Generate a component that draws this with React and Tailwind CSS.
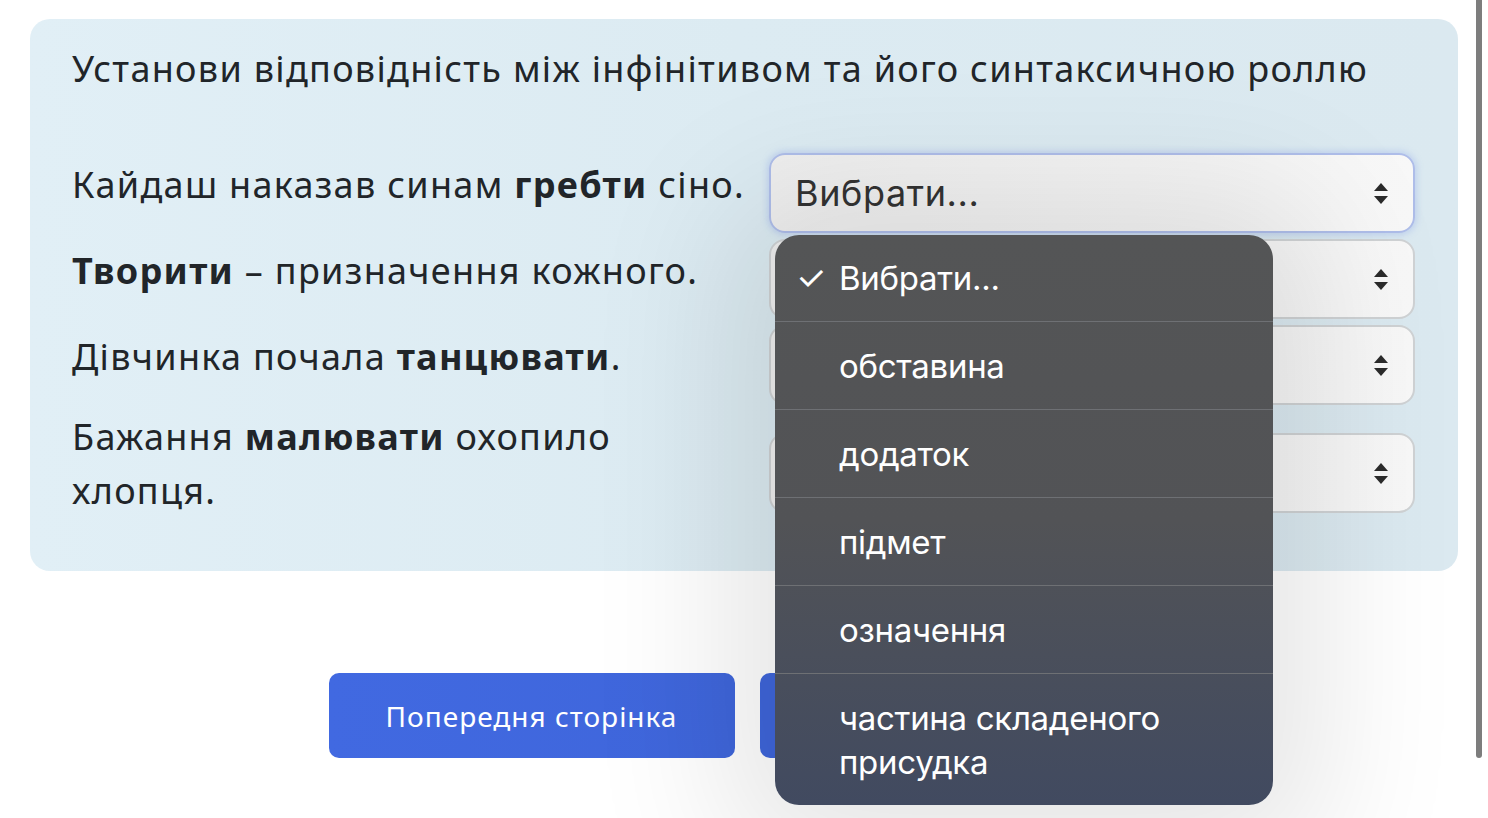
import { useState } from "react";

const ROWS = [
  { pre: "Кайдаш наказав синам ", bold: "гребти", post: " сіно." },
  { pre: "", bold: "Творити", post: " – призначення кожного." },
  { pre: "Дівчинка почала ", bold: "танцювати", post: "." },
  { pre: "Бажання ", bold: "малювати", post: " охопило хлопця." },
];

const OPTIONS = ["Вибрати...", "обставина", "додаток", "підмет", "означення", "частина складеного присудка"];

const SANS = "font-['Noto_Sans','Open_Sans',sans-serif]";
const SYS = "font-['Inter','Roboto',sans-serif]";

function Arrows() {
  return (
    <svg width="14" height="21" viewBox="0 0 14 21" className="shrink-0">
      <path d="M7 0 L14 8 H0 Z" fill="#2b2b2b" />
      <path d="M0 13 H14 L7 21 Z" fill="#2b2b2b" />
    </svg>
  );
}

function SelectBox({ focused, label }) {
  return (
    <div
      className={
        "h-[80px] flex-1 flex items-center justify-between pl-[24px] pr-[25px] rounded-[16px] bg-gradient-to-r from-[#efefef] to-[#f8f8f8] " +
        (focused
          ? "border-2 border-[#aebde9] shadow-[0_0_6px_2px_rgba(140,165,235,0.35)]"
          : "border-2 border-[#cfd2d4]")
      }
    >
      <span className={`${SYS} text-[36px] text-[#333] tracking-[0.6px]`}>{label}</span>
      <Arrows />
    </div>
  );
}

function Label({ row, className }) {
  return (
    <p className={className}>
      {row.pre}
      <b className="font-bold">{row.bold}</b>
      {row.post}
    </p>
  );
}

export default function App() {
  const [open] = useState(true);

  return (
    <div className={`relative w-[1488px] h-[818px] overflow-hidden bg-white ${SANS} text-[#212529]`}>
      <div className="pt-[19px] pl-[30px] pr-[30px]">
        <div className="h-[552px] rounded-[20px] bg-gradient-to-r from-[#e1eff6] via-[#dcebf2] to-[#dbe9f0] pt-[26px] pl-[42px] pr-[43px]">
          <h1 className="text-[36px] leading-[48px] font-normal tracking-[1.3px] whitespace-nowrap">
            Установи відповідність між інфінітивом та його синтаксичною роллю
          </h1>

          <div className="mt-[60px] flex flex-col gap-[6px]">
            {ROWS.slice(0, 3).map((r, i) => (
              <div key={i} className="flex items-start gap-[12px]">
                <Label row={r} className="w-[685px] pt-[5px] text-[36px] leading-[54px] tracking-[1.3px] whitespace-nowrap" />
                <SelectBox focused={i === 0} label={i === 0 ? "Вибрати..." : ""} />
              </div>
            ))}
            <div className="flex items-start gap-[12px]">
              <Label row={ROWS[3]} className="w-[600px] mr-[85px] -mt-[1px] text-[36px] leading-[54px] tracking-[1.3px]" />
              <div className="flex-1 flex mt-[22px]">
                <SelectBox label="" />
              </div>
            </div>
          </div>
        </div>

        <div className="mt-[102px] flex justify-center gap-[25px] pl-[6px]">
          <button className="w-[406px] h-[85px] rounded-[10px] bg-gradient-to-r from-[#4169e1] to-[#3f66db] text-white text-[28px] tracking-[1px]">
            Попередня сторінка
          </button>
          <button className="w-[406px] h-[85px] rounded-[10px] bg-[#3f66db] text-white text-[28px] tracking-[1px]">
            Наступна сторінка
          </button>
        </div>
      </div>

      {/* native picker overlay */}
      {open && (
        <div className={`absolute left-[775px] top-[235px] w-[498px] h-[570px] rounded-[24px] overflow-hidden bg-gradient-to-b from-[#545556] via-[#525356] to-[#414a60] shadow-[0_10px_140px_50px_rgba(0,0,0,0.10)] ${SYS} text-white`}>
          {OPTIONS.map((o, i) => (
            <div
              key={o}
              className={
                "relative flex items-center pl-[64px] pr-[40px] text-[33px] leading-[44px] tracking-[-0.3px] " +
                (i === 0 ? "h-[86px]" : i === 5 ? "h-[132px] border-t border-[#6e7074]" : "h-[88px] border-t border-[#6e7074]")
              }
            >
              {i === 0 && <span className="absolute left-[21px] text-[34px]">✓</span>}
              <span>{o}</span>
            </div>
          ))}
        </div>
      )}

      {/* overlay scrollbar */}
      <div className="absolute left-[1476px] top-0 w-[6px] h-[758px] rounded-b-full bg-[#7d7d7d]" />
    </div>
  );
}
